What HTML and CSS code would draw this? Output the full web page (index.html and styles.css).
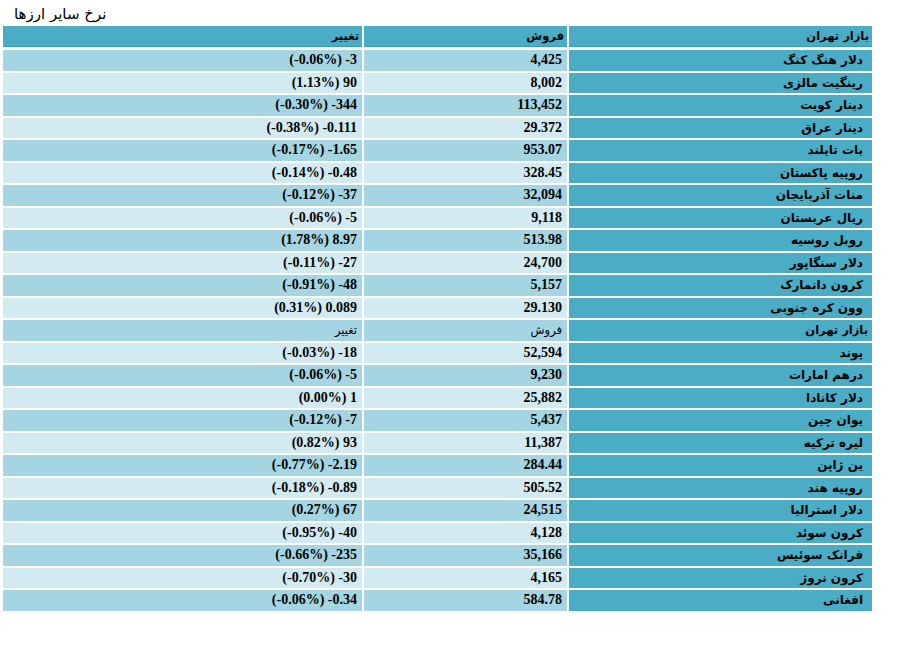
FILE: index.html
```html
<!DOCTYPE html>
<html lang="fa">
<head>
<meta charset="utf-8">
<title>نرخ سایر ارزها</title>
<link rel="stylesheet" href="styles.css">
</head>
<body>
<div class="page">
  <div class="title">نرخ سایر ارزها</div>
  <table class="rates head" dir="rtl">
    <colgroup><col class="c-name"><col class="c-sell"><col class="c-chg"></colgroup>
    <thead>
      <tr><th>بازار تهران</th><th>فروش</th><th>تغییر</th></tr>
    </thead>
  </table>
  <table class="rates body" dir="rtl">
    <colgroup><col class="c-name"><col class="c-sell"><col class="c-chg"></colgroup>
    <tbody>
      <tr class="odd"><td class="name">دلار هنگ کنگ</td><td class="num">4,425</td><td class="num"><span class="chg">(-0.06%) -3</span></td></tr>
      <tr class="even"><td class="name">رینگیت مالزی</td><td class="num">8,002</td><td class="num"><span class="chg">(1.13%) 90</span></td></tr>
      <tr class="odd"><td class="name">دینار کویت</td><td class="num">113,452</td><td class="num"><span class="chg">(-0.30%) -344</span></td></tr>
      <tr class="even"><td class="name">دینار عراق</td><td class="num">29.372</td><td class="num"><span class="chg">(-0.38%) -0.111</span></td></tr>
      <tr class="odd"><td class="name">بات تایلند</td><td class="num">953.07</td><td class="num"><span class="chg">(-0.17%) -1.65</span></td></tr>
      <tr class="even"><td class="name">روپیه پاکستان</td><td class="num">328.45</td><td class="num"><span class="chg">(-0.14%) -0.48</span></td></tr>
      <tr class="odd"><td class="name">منات آذربایجان</td><td class="num">32,094</td><td class="num"><span class="chg">(-0.12%) -37</span></td></tr>
      <tr class="even"><td class="name">ریال عربستان</td><td class="num">9,118</td><td class="num"><span class="chg">(-0.06%) -5</span></td></tr>
      <tr class="odd"><td class="name">روبل روسیه</td><td class="num">513.98</td><td class="num"><span class="chg">(1.78%) 8.97</span></td></tr>
      <tr class="even"><td class="name">دلار سنگاپور</td><td class="num">24,700</td><td class="num"><span class="chg">(-0.11%) -27</span></td></tr>
      <tr class="odd"><td class="name">کرون دانمارک</td><td class="num">5,157</td><td class="num"><span class="chg">(-0.91%) -48</span></td></tr>
      <tr class="even"><td class="name">وون کره جنوبی</td><td class="num">29.130</td><td class="num"><span class="chg">(0.31%) 0.089</span></td></tr>
      <tr class="odd sub"><td class="name subname">بازار تهران</td><td class="subcell">فروش</td><td class="subcell">تغییر</td></tr>
      <tr class="even"><td class="name">پوند</td><td class="num">52,594</td><td class="num"><span class="chg">(-0.03%) -18</span></td></tr>
      <tr class="odd"><td class="name">درهم امارات</td><td class="num">9,230</td><td class="num"><span class="chg">(-0.06%) -5</span></td></tr>
      <tr class="even"><td class="name">دلار کانادا</td><td class="num">25,882</td><td class="num"><span class="chg">(0.00%) 1</span></td></tr>
      <tr class="odd"><td class="name">یوان چین</td><td class="num">5,437</td><td class="num"><span class="chg">(-0.12%) -7</span></td></tr>
      <tr class="even"><td class="name">لیره ترکیه</td><td class="num">11,387</td><td class="num"><span class="chg">(0.82%) 93</span></td></tr>
      <tr class="odd"><td class="name">ین ژاپن</td><td class="num">284.44</td><td class="num"><span class="chg">(-0.77%) -2.19</span></td></tr>
      <tr class="even"><td class="name">روپیه هند</td><td class="num">505.52</td><td class="num"><span class="chg">(-0.18%) -0.89</span></td></tr>
      <tr class="odd"><td class="name">دلار استرالیا</td><td class="num">24,515</td><td class="num"><span class="chg">(0.27%) 67</span></td></tr>
      <tr class="even"><td class="name">کرون سوئد</td><td class="num">4,128</td><td class="num"><span class="chg">(-0.95%) -40</span></td></tr>
      <tr class="odd"><td class="name">فرانک سوئیس</td><td class="num">35,166</td><td class="num"><span class="chg">(-0.66%) -235</span></td></tr>
      <tr class="even"><td class="name">کرون نروژ</td><td class="num">4,165</td><td class="num"><span class="chg">(-0.70%) -30</span></td></tr>
      <tr class="odd"><td class="name">افغانی</td><td class="num">584.78</td><td class="num"><span class="chg">(-0.06%) -0.34</span></td></tr>
    </tbody>
  </table>
</div>
</body>
</html>
```
FILE: styles.css
```css
html, body {
  margin: 0;
  padding: 0;
  background: #ffffff;
}

.page {
  padding: 4px 0 0 1px;
  font-family: "Liberation Sans", "DejaVu Sans", sans-serif;
  color: #000;
}

.title {
  padding-left: 13px;
  height: 20px;
  font-size: 15px;
  line-height: 20px;
  font-family: "DejaVu Sans", "Liberation Sans", sans-serif;
}

.rates {
  table-layout: fixed;
  border-collapse: separate;
  width: 873px;
}

.rates.head {
  border-spacing: 2px 0;
  margin-top: 2px;
  margin-bottom: 1px;
}

.rates.body {
  border-spacing: 2px 2px;
}

.c-name { width: 303px; }
.c-sell { width: 203px; }
.c-chg { width: 359px; }

.rates th {
  background: #4bacc6;
  border-bottom: 1px solid #3f9bb4;
  height: 21px;
  box-sizing: border-box;
  padding: 0 3px 0 4px;
  text-align: right;
  vertical-align: middle;
  font-family: "DejaVu Sans", sans-serif;
  font-size: 11.5px;
  font-weight: bold;
  line-height: 20px;
}

.rates td {
  height: 20.5px;
  box-sizing: border-box;
  padding: 0 5px;
  text-align: right;
  vertical-align: middle;
  line-height: 18px;
}

.rates td.name {
  background: #4bacc6;
  padding-right: 9px;
  font-family: "DejaVu Sans", sans-serif;
  font-size: 12px;
  font-weight: bold;
}

.rates td.subname {
  padding-right: 4px;
  font-size: 11.5px;
}

.odd td { background: #a5d5e2; }
.even td { background: #d2eaf1; }
.rates tr td.name { background: #4bacc6; }

.num {
  font-family: "Liberation Serif", serif;
  font-size: 14px;
  font-weight: bold;
}

.chg {
  direction: ltr;
  unicode-bidi: isolate;
}

.subcell {
  font-family: "DejaVu Sans", serif;
  font-size: 11.5px;
  font-weight: normal;
}
```
